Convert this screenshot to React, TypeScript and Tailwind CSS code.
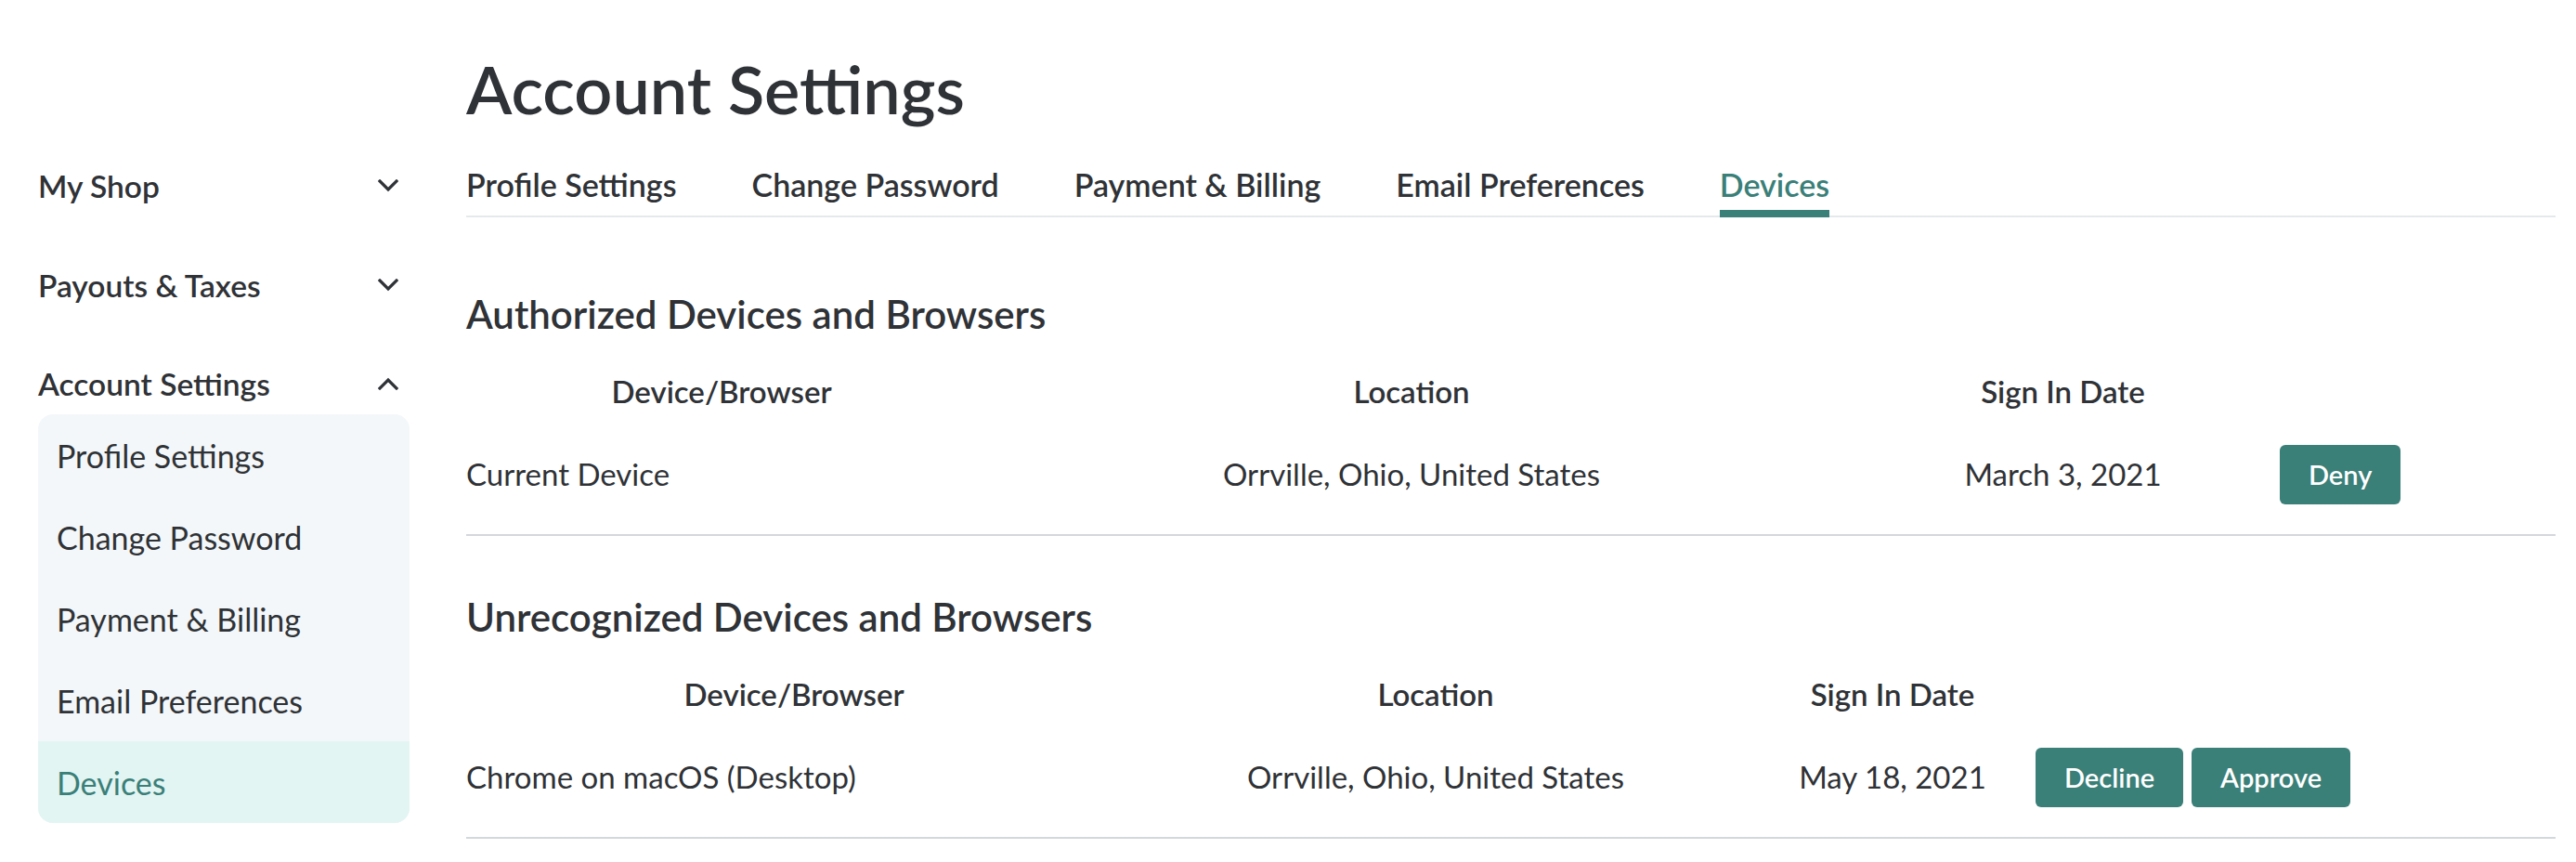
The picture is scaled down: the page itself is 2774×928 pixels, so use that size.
import { ReactNode } from 'react';

const text = 'text-[#2f3236]';

function Chevron({ up = false }: { up?: boolean }) {
  return (
    <svg width="22" height="14" viewBox="0 0 22 14" className={up ? 'rotate-180' : ''}>
      <polyline points="2,2 11,11 20,2" fill="none" stroke="#2f3236" strokeWidth="3.2" strokeLinecap="square" />
    </svg>
  );
}

function SideHeading({ label, open = false }: { label: string; open?: boolean }) {
  return (
    <div className="flex h-[66px] items-center justify-between pr-[12px]">
      <span className={`text-[33.5px] font-semibold ${text}`}>{label}</span>
      <Chevron up={open} />
    </div>
  );
}

const subItems = ['Profile Settings', 'Change Password', 'Payment & Billing', 'Email Preferences', 'Devices'];
const tabs = ['Profile Settings', 'Change Password', 'Payment & Billing', 'Email Preferences', 'Devices'];

function Btn({ children }: { children: ReactNode }) {
  return (
    <button className="h-[64px] rounded-[6px] bg-[#3a7f78] px-[31px] text-[29px] font-semibold text-white">
      {children}
    </button>
  );
}

interface DeviceRow {
  device: string;
  location: string;
  date: string;
  actions: string[];
}

function DeviceTable({ title, cols, row }: { title: string; cols: string; row: DeviceRow }) {
  return (
    <section>
      <h2 className={`flex h-[48px] items-center text-[42px] font-semibold ${text}`}>{title}</h2>
      <div className={`mt-[35px] grid h-[40px] items-center text-[33px] font-semibold ${text} ${cols}`}>
        <div className="text-center">Device/Browser</div>
        <div className="text-center">Location</div>
        <div className="text-center">Sign In Date</div>
        <div />
      </div>
      <div className={`mt-[42px] grid h-[64px] items-center text-[33px] ${text} ${cols}`}>
        <div>{row.device}</div>
        <div className="text-center">{row.location}</div>
        <div className="text-center">{row.date}</div>
        <div className="flex gap-[9px]">
          {row.actions.map((a) => (
            <Btn key={a}>{a}</Btn>
          ))}
        </div>
      </div>
      <div className="mt-[32px] h-[2px] bg-[#d3d8dc]" />
    </section>
  );
}

export default function App() {
  return (
    <div className="flex min-h-[928px] w-[2774px] bg-white font-['Lato',sans-serif]">
      <aside className="ml-[41px] w-[400px] pt-[167px]">
        <SideHeading label="My Shop" />
        <div className="mt-[41px]">
          <SideHeading label="Payouts & Taxes" />
        </div>
        <div className="mt-[40px]">
          <SideHeading label="Account Settings" open />
        </div>
        <div className="overflow-hidden rounded-[16px] bg-[#f3f7f9]">
          {subItems.map((item) => (
            <div
              key={item}
              className={`flex h-[88px] items-center pl-[20px] text-[34px] ${
                item === 'Devices' ? 'bg-[#e2f5f3] text-[#3a7f78]' : text
              }`}
            >
              {item}
            </div>
          ))}
        </div>
      </aside>

      <main className="ml-[61px] w-[2250px] pt-[55px]">
        <h1 className={`h-[80px] text-[72px] leading-[80px] font-semibold ${text}`}>Account Settings</h1>
        <nav className="flex gap-[81px] border-b-2 border-[#e6e9ec] pt-[43px]">
          {tabs.map((t) => (
            <div key={t} className="flex flex-col">
              <span
                className={`h-[41px] text-[34px] leading-[41px] font-semibold ${
                  t === 'Devices' ? 'text-[#3a7f78]' : text
                }`}
              >
                {t}
              </span>
              <div className={`relative -mb-[2px] mt-[7px] h-[8px] ${t === 'Devices' ? 'bg-[#3a7f78]' : ''}`} />
            </div>
          ))}
        </nav>

        <div className="mt-[80px]">
          <DeviceTable
            title="Authorized Devices and Browsers"
            cols="grid-cols-[550px_936px_467px_1fr]"
            row={{ device: 'Current Device', location: 'Orrville, Ohio, United States', date: 'March 3, 2021', actions: ['Deny'] }}
          />
        </div>
        <div className="mt-[63px]">
          <DeviceTable
            title="Unrecognized Devices and Browsers"
            cols="grid-cols-[706px_676px_308px_1fr]"
            row={{
              device: 'Chrome on macOS (Desktop)',
              location: 'Orrville, Ohio, United States',
              date: 'May 18, 2021',
              actions: ['Decline', 'Approve'],
            }}
          />
        </div>
      </main>
    </div>
  );
}
